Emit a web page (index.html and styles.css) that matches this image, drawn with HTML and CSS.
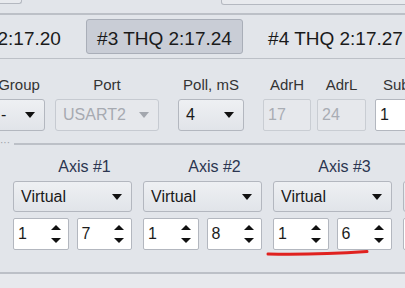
FILE: index.html
```html
<!DOCTYPE html>
<html lang="en">
<head>
  <meta charset="UTF-8" />
  <meta name="viewport" content="width=device-width, initial-scale=1.0" />
  <title>Axis setup</title>
  <link rel="stylesheet" href="styles.css">
</head>
<body>
  <div class="top">
    <div class="stub stub-left"></div>
    <div class="stub stub-right"></div>
  </div>

  <div class="tabs">
    <div class="tab">#2 THQ 2:17.20</div>
    <div class="tab active">#3 THQ 2:17.24</div>
    <div class="tab">#4 THQ 2:17.27</div>
  </div>

  <div class="params">
    <div class="col col-group">
      <span class="lbl">Group</span>
      <div class="combo">-<i class="arrow"></i></div>
    </div>
    <div class="col col-port">
      <span class="lbl">Port</span>
      <div class="combo disabled">USART2<i class="arrow"></i></div>
    </div>
    <div class="col col-poll">
      <span class="lbl">Poll, mS</span>
      <div class="combo">4<i class="arrow"></i></div>
    </div>
    <div class="col col-adrh">
      <span class="lbl">AdrH</span>
      <div class="field disabled">17</div>
    </div>
    <div class="col col-adrl">
      <span class="lbl">AdrL</span>
      <div class="field disabled">24</div>
    </div>
    <div class="col col-sub">
      <span class="lbl">Sub</span>
      <div class="field">1<span class="spinbtn"><i class="up"></i><i class="down"></i></span></div>
    </div>
  </div>

  <div class="divider">
    <span class="dots">&middot;&middot;&middot;</span>
    <span class="rule"></span>
  </div>

  <div class="axes">
    <div class="axis">
      <div class="axis-lbl">Axis #1</div>
      <div class="combo">Virtual<i class="arrow"></i></div>
      <div class="spins">
        <div class="spin">1<span class="spinbtn"><i class="up"></i><i class="down"></i></span></div>
        <div class="spin">7<span class="spinbtn"><i class="up"></i><i class="down"></i></span></div>
      </div>
    </div>
    <div class="axis">
      <div class="axis-lbl">Axis #2</div>
      <div class="combo">Virtual<i class="arrow"></i></div>
      <div class="spins">
        <div class="spin">1<span class="spinbtn"><i class="up"></i><i class="down"></i></span></div>
        <div class="spin">8<span class="spinbtn"><i class="up"></i><i class="down"></i></span></div>
      </div>
    </div>
    <div class="axis">
      <div class="axis-lbl">Axis #3</div>
      <div class="combo">Virtual<i class="arrow"></i></div>
      <div class="spins">
        <div class="spin">1<span class="spinbtn"><i class="up"></i><i class="down"></i></span></div>
        <div class="spin">6<span class="spinbtn"><i class="up"></i><i class="down"></i></span></div>
      </div>
    </div>
    <div class="axis">
      <div class="axis-lbl">Axis #4</div>
      <div class="combo">Virtual<i class="arrow"></i></div>
      <div class="spins">
        <div class="spin">1<span class="spinbtn"><i class="up"></i><i class="down"></i></span></div>
        <div class="spin">9<span class="spinbtn"><i class="up"></i><i class="down"></i></span></div>
      </div>
    </div>
  </div>

  <div class="bottom"></div>

  <svg class="mark" width="106" height="10" viewBox="0 0 106 10">
    <path d="M3 6 Q 50 7 102 3.5" fill="none" stroke="#e0211f" stroke-width="3" stroke-linecap="round" />
  </svg>
</body>
</html>
```

FILE: styles.css
```css
body {
  margin: 0;
  background: #e2e5ea;
  color: #1c1c1c;
  font-family: 'Liberation Sans', Arial, sans-serif;
  width: 405px;
  height: 288px;
  overflow: hidden;
  position: relative;
}
.top {
  height: 13px;
  display: flex;
  border-bottom: 2px solid #bcc0c7;
}
.stub {
  background: #e8eaee;
  border: 1px solid #b4b8c0;
  border-top: none;
  border-radius: 0 0 3px 3px;
}
.stub-left {
  width: 24px;
  height: 3px;
  margin-left: -4px;
}
.stub-right {
  height: 4px;
  margin-left: 199px;
  flex: 1;
  margin-right: -10px;
}
.tabs {
  display: flex;
  gap: 14px;
  margin-left: -85px;
  padding: 4px 0 4px;
  border-bottom: 1px solid #bcc0c7;
  white-space: nowrap;
}
.tab {
  flex: none;
  width: 157px;
  height: 35px;
  box-sizing: border-box;
  line-height: 37px;
  text-align: center;
  font-size: 19px;
  color: #1a1a1a;
  border: 1px solid transparent;
  border-radius: 3px;
}
.tab.active {
  background: #c9cdd6;
  border-color: #a9aeb8;
}
.params {
  display: flex;
  margin-top: 17px;
  margin-left: -7px;
  white-space: nowrap;
}
.col {
  flex: none;
  display: flex;
  flex-direction: column;
  align-items: center;
  gap: 5px;
}
.lbl {
  font-size: 15px;
  line-height: 18px;
  color: #333;
}
.col-group { width: 52px; }
.col-port { width: 104px; margin-left: 10px; }
.col-poll { width: 66px; margin-left: 19px; }
.col-adrh { width: 48px; margin-left: 19px; }
.col-adrl { width: 49px; margin-left: 6px; }
.col-sub { width: 60px; margin-left: 9px; align-items: flex-start; }
.col-sub .lbl { margin-left: 8px; }
.combo {
  position: relative;
  width: 100%;
  height: 32px;
  box-sizing: border-box;
  padding-left: 7px;
  line-height: 30px;
  font-size: 16px;
  background: linear-gradient(#eef0f3, #e1e4e9);
  border: 1px solid #b3b7bf;
  border-radius: 3px;
  color: #1a1a1a;
  display: flex;
  align-items: center;
}
.arrow {
  margin-left: auto;
  margin-right: 9px;
  width: 0;
  height: 0;
  border-left: 5px solid transparent;
  border-right: 5px solid transparent;
  border-top: 6px solid #111;
}
.combo.disabled {
  background: #e6e8ec;
  border-color: #c6cad1;
  color: #a6aab1;
}
.combo.disabled .arrow {
  border-top-color: #a3a7ae;
}
.field {
  width: 100%;
  height: 32px;
  box-sizing: border-box;
  padding-left: 4px;
  font-size: 16px;
  line-height: 30px;
  background: #fff;
  border: 1px solid #b3b7bf;
  border-radius: 2px;
  display: flex;
  align-items: center;
}
.field.disabled {
  background: #e6e8ec;
  border-color: #c9cdd3;
  color: #a9adb4;
}
.divider {
  display: flex;
  align-items: center;
  margin-top: 10px;
  height: 6px;
}
.dots {
  font-size: 10px;
  line-height: 6px;
  color: #9a9ea6;
  width: 14px;
  margin-top: -3px;
}
.rule {
  flex: 1;
  border-top: 2px solid #bcc0c7;
}
.axes {
  display: flex;
  gap: 11px;
  margin-top: 10px;
  margin-left: 13px;
  white-space: nowrap;
}
.axis {
  flex: none;
  width: 119px;
  display: flex;
  flex-direction: column;
  gap: 5px;
}
.axis-lbl {
  font-size: 16px;
  line-height: 19px;
  text-align: center;
  padding-left: 24px;
  color: #2b3550;
}
.axis .combo {
  height: 31px;
}
.spins {
  display: flex;
  gap: 8px;
  margin-top: 1px;
}
.spin {
  flex: 1;
  height: 32px;
  box-sizing: border-box;
  padding-left: 4px;
  font-size: 16px;
  background: #fff;
  border: 1px solid #b3b7bf;
  border-radius: 2px;
  display: flex;
  align-items: center;
}
.spinbtn {
  margin-left: auto;
  margin-right: 7px;
  display: flex;
  flex-direction: column;
  gap: 8px;
}
.spinbtn .up {
  width: 0;
  height: 0;
  border-left: 5px solid transparent;
  border-right: 5px solid transparent;
  border-bottom: 5px solid #111;
}
.spinbtn .down {
  width: 0;
  height: 0;
  border-left: 5px solid transparent;
  border-right: 5px solid transparent;
  border-top: 5px solid #111;
}
.bottom {
  margin-top: 22px;
  border-top: 2px solid #bcc0c7;
  height: 20px;
  background: #e7e9ed;
}
.mark {
  position: absolute;
  left: 265px;
  top: 248px;
}
```
